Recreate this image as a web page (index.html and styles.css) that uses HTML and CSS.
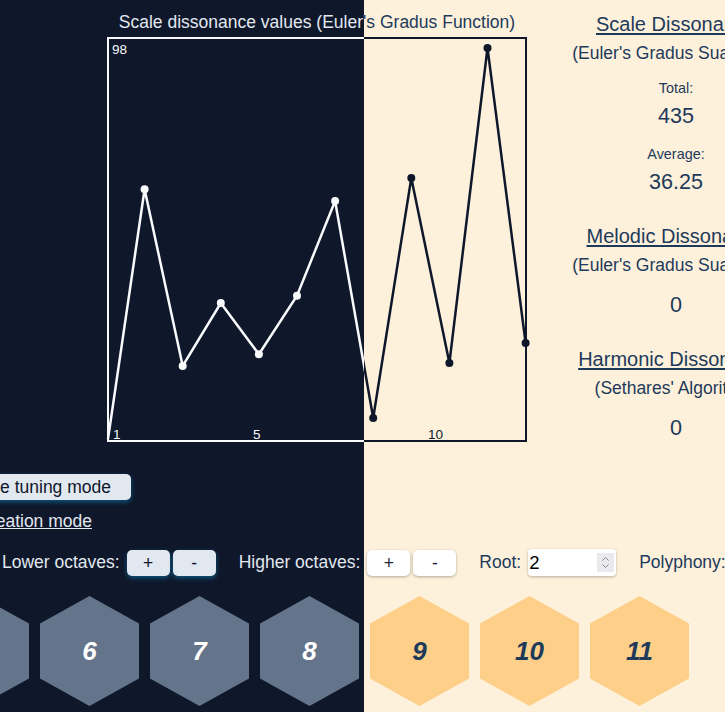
FILE: index.html
```html
<!DOCTYPE html>
<html lang="en">
<head>
<meta charset="utf-8">
<title>Scale dissonance</title>
<link rel="stylesheet" href="styles.css">
</head>
<body>
<div class="stage">
  <div class="theme theme-dark">
    <div class="top">
      <div class="chart-col">
        <div class="chart-title">Scale dissonance values (Euler's Gradus Function)</div>
        <svg class="chart" width="420" height="405" viewBox="0 0 420 405">
          <rect class="chart-frame" x="1" y="1" width="418" height="403"/>
          <text class="chart-label" x="5" y="17">98</text>
          <text class="chart-label" x="6" y="402">1</text>
          <text class="chart-label" x="146" y="402">5</text>
          <text class="chart-label" x="321" y="402">10</text>
          <polyline class="chart-line" points="1,402 37.6,152.3 75.7,329 113.8,266 151.9,317.3 190,258.7 228.1,164 266.2,381 304.3,141 342.4,326 380.5,11 418.6,306"/>
          <circle class="chart-dot" cx="37.6" cy="152.3" r="4"/>
          <circle class="chart-dot" cx="75.7" cy="329" r="4"/>
          <circle class="chart-dot" cx="113.8" cy="266" r="4"/>
          <circle class="chart-dot" cx="151.9" cy="317.3" r="4"/>
          <circle class="chart-dot" cx="190" cy="258.7" r="4"/>
          <circle class="chart-dot" cx="228.1" cy="164" r="4"/>
          <circle class="chart-dot" cx="266.2" cy="381" r="4"/>
          <circle class="chart-dot" cx="304.3" cy="141" r="4"/>
          <circle class="chart-dot" cx="342.4" cy="326" r="4"/>
          <circle class="chart-dot" cx="380.5" cy="11" r="4"/>
          <circle class="chart-dot" cx="418.6" cy="306" r="4"/>
        </svg>
      </div>
      <div class="stats">
        <h2 class="stat-heading">Scale Dissonance</h2>
        <div class="stat-sub">(Euler's Gradus Suavitatis)</div>
        <div class="stat-label">Total:</div>
        <div class="stat-value">435</div>
        <div class="stat-label">Average:</div>
        <div class="stat-value">36.25</div>
        <h2 class="stat-heading section">Melodic Dissonance</h2>
        <div class="stat-sub">(Euler's Gradus Suavitatis)</div>
        <div class="stat-value solo">0</div>
        <h2 class="stat-heading section">Harmonic Dissonance</h2>
        <div class="stat-sub">(Sethares' Algorithm)</div>
        <div class="stat-value solo">0</div>
      </div>
    </div>
    <div class="mode-row"><button class="btn mode-btn">Scale tuning mode</button></div>
    <div class="link-row"><a class="mode-link" href="#">Scale creation mode</a></div>
    <div class="octave-row">
      <div class="group"><span>Lower octaves:</span><div class="btn-pair"><button class="btn small-btn">+</button><button class="btn small-btn">-</button></div></div>
      <div class="group"><span>Higher octaves:</span><div class="btn-pair"><button class="btn small-btn">+</button><button class="btn small-btn">-</button></div></div>
      <div class="group"><span>Root:</span><div class="num-input"><span class="num-value">2</span><span class="spinner"><svg width="17" height="19" viewBox="0 0 17 19"><path d="M5.5 7.5 L8.5 4.5 L11.5 7.5 M5.5 11.5 L8.5 14.5 L11.5 11.5"/></svg></span></div></div>
      <div class="group"><span>Polyphony:</span></div>
    </div>
    <div class="hex-row">
      <div class="hex">5</div><div class="hex">6</div><div class="hex">7</div><div class="hex">8</div><div class="hex">9</div><div class="hex">10</div><div class="hex">11</div>
    </div>
  </div>

  <div class="theme theme-light">
    <div class="top">
      <div class="chart-col">
        <div class="chart-title">Scale dissonance values (Euler's Gradus Function)</div>
        <svg class="chart" width="420" height="405" viewBox="0 0 420 405">
          <rect class="chart-frame" x="1" y="1" width="418" height="403"/>
          <text class="chart-label" x="5" y="17">98</text>
          <text class="chart-label" x="6" y="402">1</text>
          <text class="chart-label" x="146" y="402">5</text>
          <text class="chart-label" x="321" y="402">10</text>
          <polyline class="chart-line" points="1,402 37.6,152.3 75.7,329 113.8,266 151.9,317.3 190,258.7 228.1,164 266.2,381 304.3,141 342.4,326 380.5,11 418.6,306"/>
          <circle class="chart-dot" cx="37.6" cy="152.3" r="4"/>
          <circle class="chart-dot" cx="75.7" cy="329" r="4"/>
          <circle class="chart-dot" cx="113.8" cy="266" r="4"/>
          <circle class="chart-dot" cx="151.9" cy="317.3" r="4"/>
          <circle class="chart-dot" cx="190" cy="258.7" r="4"/>
          <circle class="chart-dot" cx="228.1" cy="164" r="4"/>
          <circle class="chart-dot" cx="266.2" cy="381" r="4"/>
          <circle class="chart-dot" cx="304.3" cy="141" r="4"/>
          <circle class="chart-dot" cx="342.4" cy="326" r="4"/>
          <circle class="chart-dot" cx="380.5" cy="11" r="4"/>
          <circle class="chart-dot" cx="418.6" cy="306" r="4"/>
        </svg>
      </div>
      <div class="stats">
        <h2 class="stat-heading">Scale Dissonance</h2>
        <div class="stat-sub">(Euler's Gradus Suavitatis)</div>
        <div class="stat-label">Total:</div>
        <div class="stat-value">435</div>
        <div class="stat-label">Average:</div>
        <div class="stat-value">36.25</div>
        <h2 class="stat-heading section">Melodic Dissonance</h2>
        <div class="stat-sub">(Euler's Gradus Suavitatis)</div>
        <div class="stat-value solo">0</div>
        <h2 class="stat-heading section">Harmonic Dissonance</h2>
        <div class="stat-sub">(Sethares' Algorithm)</div>
        <div class="stat-value solo">0</div>
      </div>
    </div>
    <div class="mode-row"><button class="btn mode-btn">Scale tuning mode</button></div>
    <div class="link-row"><a class="mode-link" href="#">Scale creation mode</a></div>
    <div class="octave-row">
      <div class="group"><span>Lower octaves:</span><div class="btn-pair"><button class="btn small-btn">+</button><button class="btn small-btn">-</button></div></div>
      <div class="group"><span>Higher octaves:</span><div class="btn-pair"><button class="btn small-btn">+</button><button class="btn small-btn">-</button></div></div>
      <div class="group"><span>Root:</span><div class="num-input"><span class="num-value">2</span><span class="spinner"><svg width="17" height="19" viewBox="0 0 17 19"><path d="M5.5 7.5 L8.5 4.5 L11.5 7.5 M5.5 11.5 L8.5 14.5 L11.5 11.5"/></svg></span></div></div>
      <div class="group"><span>Polyphony:</span></div>
    </div>
    <div class="hex-row">
      <div class="hex">5</div><div class="hex">6</div><div class="hex">7</div><div class="hex">8</div><div class="hex">9</div><div class="hex">10</div><div class="hex">11</div>
    </div>
  </div>
</div>
</body>
</html>
```

FILE: styles.css
```css
html, body {
  margin: 0;
  padding: 0;
}

body {
  background: #0f172a;
}

.stage {
  position: relative;
  width: 725px;
  height: 712px;
  overflow: hidden;
}

.theme {
  width: 725px;
  height: 712px;
  overflow: hidden;
  background: var(--bg);
  color: var(--fg);
  font-family: "Liberation Sans", Arial, sans-serif;
  font-size: 17.5px;
}

.theme-dark {
  --bg: #0f172a;
  --fg: #e2e8f0;
  --chart: #f8fafc;
  --hex: #64748b;
  --hex-text: #ffffff;
  --btn-bg: #e2e8f0;
  --btn-fg: #0f172a;
  --btn-shadow: 0 2px 5px rgba(14, 165, 233, 0.45);
}

.theme-light {
  --bg: #fdf1dc;
  --fg: #1e3a5a;
  --chart: #0f172a;
  --hex: #fdcf88;
  --hex-text: #1e3a5a;
  --btn-bg: #ffffff;
  --btn-fg: #1e293b;
  --btn-shadow: 0 1px 3px rgba(0, 0, 0, 0.3);
  position: absolute;
  top: 0;
  left: 0;
  clip-path: inset(0 0 0 364px);
}

/* ---------- top: chart + stats ---------- */
.top {
  display: flex;
  align-items: flex-start;
  padding-top: 12px;
}

.chart-col {
  margin-left: 107px;
  width: 420px;
  display: flex;
  flex-direction: column;
  align-items: center;
}

.chart-title {
  font-size: 17.5px;
  line-height: 21px;
  margin-bottom: 4px;
  white-space: nowrap;
}

.chart {
  display: block;
  overflow: visible;
}

.chart-frame {
  fill: none;
  stroke: var(--chart);
  stroke-width: 2;
}

.chart-line {
  fill: none;
  stroke: var(--chart);
  stroke-width: 2.5;
  stroke-linejoin: miter;
}

.chart-dot {
  fill: var(--chart);
}

.chart-label {
  fill: var(--chart);
  font-family: "Liberation Sans", Arial, sans-serif;
  font-size: 13.5px;
}

.stats {
  margin-left: 21px;
  width: 256px;
  flex: none;
  text-align: center;
  white-space: nowrap;
}

.stat-heading {
  margin: 0;
  font-size: 20px;
  line-height: 24px;
  font-weight: normal;
  text-decoration: underline;
  text-underline-offset: 2px;
}

.stat-heading.section {
  margin-top: 29.5px;
}

.stat-sub {
  font-size: 17.5px;
  line-height: 22px;
  margin-top: 5.5px;
}

.stat-label {
  font-size: 14.4px;
  line-height: 18px;
  margin-top: 15.5px;
}

.stat-value {
  font-size: 21.6px;
  line-height: 26px;
  margin-top: 6px;
}

.stat-value.solo {
  margin-top: 16px;
}

/* ---------- controls ---------- */
.btn {
  font-family: "Liberation Sans", Arial, sans-serif;
  font-size: 17.5px;
  color: var(--btn-fg);
  background: var(--btn-bg);
  border: none;
  border-radius: 5px;
  box-shadow: var(--btn-shadow);
  padding: 0;
  height: 26px;
  line-height: 26px;
}

.mode-row {
  width: 131px;
  display: flex;
  justify-content: flex-end;
  margin-top: 32px;
}

.mode-btn {
  flex: none;
  padding: 0 20px;
  white-space: nowrap;
}

.link-row {
  width: 92px;
  display: flex;
  justify-content: flex-end;
  margin-top: 11px;
  line-height: 20px;
}

.mode-link {
  flex: none;
  color: var(--fg);
  white-space: nowrap;
  text-decoration: underline;
}

.octave-row {
  display: flex;
  align-items: center;
  gap: 23px;
  padding-left: 2px;
  margin-top: 18px;
  white-space: nowrap;
}

.group {
  display: flex;
  align-items: center;
  gap: 7px;
  flex: none;
}

.btn-pair {
  display: flex;
  gap: 3px;
}

.small-btn {
  width: 43px;
}

.num-input {
  width: 88px;
  height: 27px;
  box-sizing: border-box;
  background: #ffffff;
  border-radius: 4px;
  box-shadow: 0 1px 3px rgba(0, 0, 0, 0.28);
  display: flex;
  align-items: center;
  justify-content: space-between;
  padding: 0 2px 0 1px;
}

.num-value {
  color: #000000;
  font-size: 18.5px;
  line-height: 27px;
}

.spinner {
  width: 17px;
  height: 19px;
  background: #e9e9ee;
  display: flex;
}

.spinner path {
  fill: none;
  stroke: #8a8a90;
  stroke-width: 1;
}

/* ---------- hex keys ---------- */
.hex-row {
  display: flex;
  gap: 11px;
  margin-top: 20px;
  margin-left: -70px;
}

.hex {
  flex: none;
  width: 99px;
  height: 110px;
  background: var(--hex);
  color: var(--hex-text);
  clip-path: polygon(50% 0, 100% 25%, 100% 75%, 50% 100%, 0 75%, 0 25%);
  display: flex;
  align-items: center;
  justify-content: center;
  font-size: 26px;
  font-weight: bold;
  font-style: italic;
}
```
